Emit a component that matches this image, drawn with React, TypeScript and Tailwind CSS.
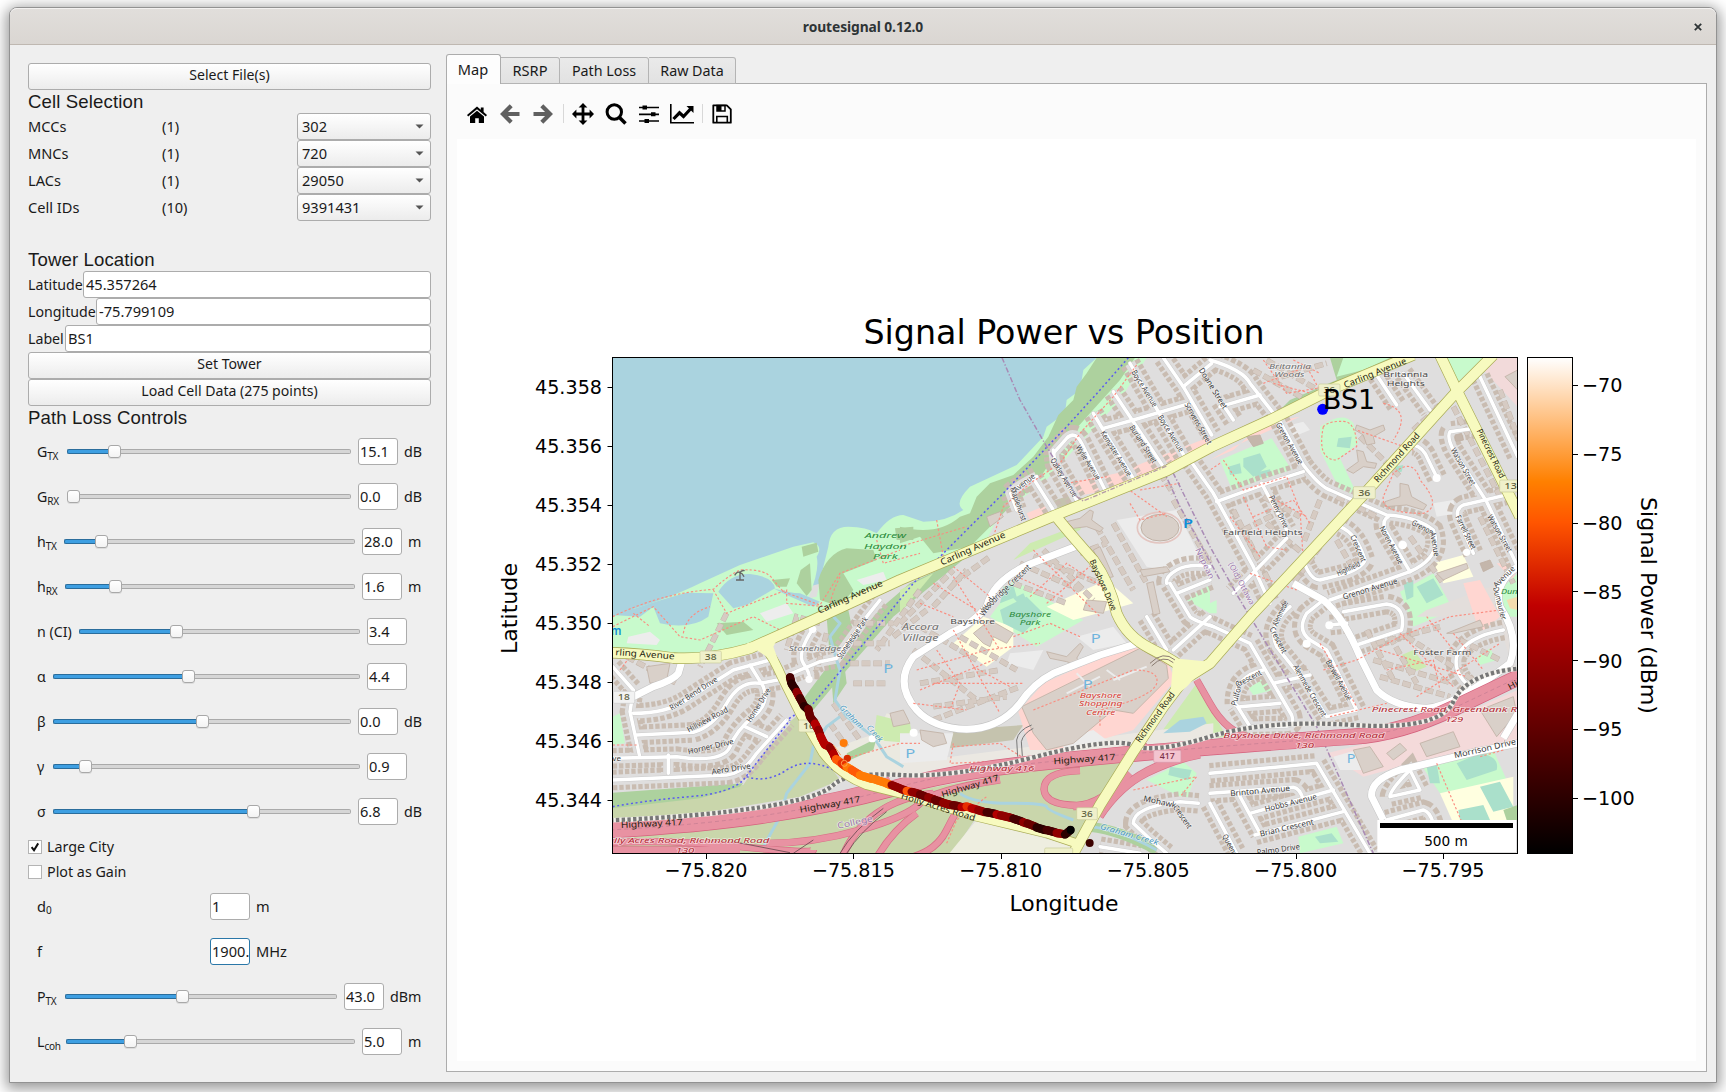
import React from "react";

const UI_FONT = "font-['Noto_Sans','Open_Sans',sans-serif]";

/* ---------- small widgets ---------- */

const frame = "border border-[#acacac] rounded-[3px]";

function PushButton({ children }: { children: React.ReactNode }) {
  return (
    <button className={`h-[27px] w-full shrink-0 ${frame} bg-linear-to-b from-white to-[#ececec] pb-[3px] text-center text-[14.100px] leading-[22px]`}>
      {children}
    </button>
  );
}

function ComboRow({ label, count, value }: { label: string; count: string; value: string }) {
  return (
    <div className="flex h-[27px] items-center">
      <span className="w-[134px]">{label}</span>
      <span className="w-[135px]">{count}</span>
      <div className={`flex h-[27px] flex-1 items-center justify-between ${frame} bg-linear-to-b from-white to-[#ececec] pr-[6px] pl-[4px]`}>
        <span>{value}</span>
        <svg width="9" height="5" viewBox="0 0 9 5">
          <path d="M0.5 0.5h8L4.5 4.6z" fill="#555" />
        </svg>
      </div>
    </div>
  );
}

function FieldRow({ label, value, labelClass }: { label: string; value: string; labelClass: string }) {
  return (
    <div className="flex h-[27px] items-center">
      <span className={`shrink-0 whitespace-nowrap text-[14.200px] ${labelClass}`}>{label}</span>
      <div className={`flex h-[27px] flex-1 items-center ${frame} bg-white pl-[2px]`}>{value}</div>
    </div>
  );
}

function ValueBox({ value, focused }: { value: string; focused?: boolean }) {
  return (
    <div
      className={`flex h-[27px] w-[40px] shrink-0 items-center overflow-hidden rounded-[3px] border bg-white pl-[1px] ${focused ? "border-[#2a77a8]" : "border-[#acacac]"}`}
    >
      {value}
    </div>
  );
}

type Slide = { base: string; sub?: string; start: number; end: number; knob: number; value: string; unit?: string };

function SliderRow({ base, sub, start, end, knob, value, unit }: Slide) {
  const filled = knob - 6 - start;
  return (
    <div className="flex h-[45px] items-center">
      <div className="shrink-0 whitespace-nowrap pl-[9px] text-[14.200px]" style={{ width: start - 28 }}>
        {base}
        {sub && <span className="relative top-[3px] text-[10px] tracking-[-0.3px]">{sub}</span>}
      </div>
      <div className="flex shrink-0 items-center" style={{ width: end - start }}>
        {filled > 0 && (
          <div className="h-[5px] rounded-l-[2px] border border-r-0 border-[#2a6d9c] bg-[#3e9fe2]" style={{ width: filled }} />
        )}
        <div className="h-[13px] w-[13px] shrink-0 rounded-[3px] border border-[#a8a8a8] bg-linear-to-b from-white to-[#f3f3f3] shadow-[0_1px_0_rgba(0,0,0,0.08)]" />
        <div className="h-[5px] flex-1 rounded-r-[2px] border border-l-0 border-[#aaaaaa] bg-[#d6d6d6]" />
      </div>
      <div className="w-[7px] shrink-0" />
      <ValueBox value={value} />
      {unit && <span className="pl-[6px] text-[14.300px]">{unit}</span>}
    </div>
  );
}

function PlainRow({ base, sub, value, unit, focused }: { base: string; sub?: string; value: string; unit: string; focused?: boolean }) {
  return (
    <div className="flex h-[45px] items-center pl-[9px]">
      <div className="w-[173px] shrink-0">
        {base}
        {sub && <span className="relative top-[2px] text-[10px]">{sub}</span>}
      </div>
      <ValueBox value={value} focused={focused} />
      <span className="pl-[6px]">{unit}</span>
    </div>
  );
}

function CheckRow({ label, checked }: { label: string; checked?: boolean }) {
  return (
    <div className="flex h-[25px] items-center gap-[5px]">
      <div className="flex h-[14px] w-[14px] items-center justify-center border border-[#b4b4b4] bg-white">
        {checked && (
          <svg width="10" height="10" viewBox="0 0 10 10">
            <path d="M1.6 5.2L4 8.2L8.2 1.4" fill="none" stroke="#111" strokeWidth="2" />
          </svg>
        )}
      </div>
      <span className="text-[14.300px]">{label}</span>
    </div>
  );
}

const SLIDERS: Slide[] = [
  { base: "G", sub: "TX", start: 67, end: 351, knob: 114, value: "15.1", unit: "dB" },
  { base: "G", sub: "RX", start: 67, end: 351, knob: 73, value: "0.0", unit: "dB" },
  { base: "h", sub: "TX", start: 64, end: 355, knob: 101, value: "28.0", unit: "m" },
  { base: "h", sub: "RX", start: 65, end: 355, knob: 115, value: "1.6", unit: "m" },
  { base: "n (CI)", start: 79, end: 360, knob: 176, value: "3.4" },
  { base: "α", start: 53, end: 360, knob: 188, value: "4.4" },
  { base: "β", start: 53, end: 351, knob: 202, value: "0.0", unit: "dB" },
  { base: "γ", start: 53, end: 360, knob: 85, value: "0.9" },
  { base: "σ", start: 53, end: 351, knob: 253, value: "6.8", unit: "dB" },
];

function Heading({ children, className }: { children: string; className: string }) {
  return <h2 className={`font-['Liberation_Sans',Arial,sans-serif] text-[18.6px] tracking-[0.120px] ${className}`}>{children}</h2>;
}

function Sidebar() {
  return (
    <aside className="flex w-[403px] shrink-0 flex-col pt-[18px]">
      <PushButton>Select File(s)</PushButton>
      <Heading className="h-[23px] leading-[23px]">Cell Selection</Heading>
      <ComboRow label="MCCs" count="(1)" value="302" />
      <ComboRow label="MNCs" count="(1)" value="720" />
      <ComboRow label="LACs" count="(1)" value="29050" />
      <ComboRow label="Cell IDs" count="(10)" value="9391431" />
      <Heading className="mt-[27px] h-[23px] leading-[23px]">Tower Location</Heading>
      <FieldRow label="Latitude" value="45.357264" labelClass="w-[55px]" />
      <FieldRow label="Longitude" value="-75.799109" labelClass="w-[68px]" />
      <FieldRow label="Label" value="BS1" labelClass="w-[37px]" />
      <PushButton>Set Tower</PushButton>
      <PushButton>Load Cell Data (275 points)</PushButton>
      <Heading className="h-[23px] leading-[23px]">Path Loss Controls</Heading>
      {SLIDERS.map((s, i) => (
        <SliderRow key={i} {...s} />
      ))}
      <CheckRow label="Large City" checked />
      <CheckRow label="Plot as Gain" />
      <PlainRow base="d" sub="0" value="1" unit="m" />
      <PlainRow base="f" value="1900." unit="MHz" focused />
      <SliderRow base="P" sub="TX" start={65} end={337} knob={182} value="43.0" unit="dBm" />
      <SliderRow base="L" sub="coh" start={66} end={355} knob={130} value="5.0" unit="m" />
    </aside>
  );
}

/* ---------- toolbar ---------- */

function Icon({ children, className }: { children: React.ReactNode; className: string }) {
  return (
    <svg viewBox="0 0 24 24" className={`h-[24px] w-[24px] shrink-0 ${className}`}>
      {children}
    </svg>
  );
}

function Toolbar() {
  return (
    <div className="flex h-[55px] items-center pt-[4px] pl-[18px]">
      <Icon className="">
        <path d="M12 4.6L2 13l1.2 1.4L12 7.2l8.8 7.2L22 13l-3.4-2.9V5.6h-2.8v2.2z" />
        <path d="M12 8.8L5 14.5V21h5.2v-4.8h3.6V21H19v-6.5z" />
      </Icon>
      <Icon className="ml-[9px]">
        <path d="M13.200 3.8L5 12L13.200 20.2M5.5 12H21.500" fill="none" stroke="#606060" strokeWidth="4.200" />
      </Icon>
      <Icon className="ml-[9px]">
        <path d="M10.800 3.8L19 12L10.800 20.2M18.5 12H2.500" fill="none" stroke="#606060" strokeWidth="4.200" />
      </Icon>
      <div className="ml-[8px] h-[19px] w-px bg-[#d8d8d8]" />
      <Icon className="ml-[7px]">
        <path d="M12 1l4.4 4.4h-3v5.2h5.2v-3L23 12l-4.4 4.4v-3h-5.2v5.2h3L12 23l-4.4-4.4h3v-5.2H5.400v3L1 12l4.400-4.400v3h5.200V5.400h-3z" />
      </Icon>
      <Icon className="ml-[9px]">
        <circle cx="10.3" cy="10" r="7.200" fill="none" stroke="#000" strokeWidth="3" />
        <path d="M15 15l6.500 6.500" stroke="#000" strokeWidth="3.600" />
      </Icon>
      <Icon className="ml-[9px]">
        <path d="M2 5.500h20M2 12.300h20M2 19h20" stroke="#000" strokeWidth="1.700" />
        <path d="M5.500 3.500h4.500v4h-4.500zM14 10.300h4.500v4H14zM7.500 17H12v4H7.500z" />
      </Icon>
      <Icon className="ml-[9px]">
        <path d="M0.800 2V20.800H24" fill="none" stroke="#000" strokeWidth="1.600" />
        <path d="M3.500 17l6-6.200 4 3.700 7-7.500" fill="none" stroke="#000" strokeWidth="3.200" />
        <path d="M16.500 4h7v7z" />
      </Icon>
      <div className="ml-[8px] h-[19px] w-px bg-[#d8d8d8]" />
      <Icon className="ml-[7px]">
        <path d="M3.300 3.300h13.500l4 4V20.700H3.300z" fill="none" stroke="#000" strokeWidth="1.800" strokeLinejoin="round" />
        <path d="M7 3.500h8V9H7z" fill="none" stroke="#000" strokeWidth="1.500" />
        <path d="M7 3.500h4.500V9H7z" />
        <path d="M6.800 20.500v-6h10.500v6" fill="none" stroke="#000" strokeWidth="1.600" />
      </Icon>
    </div>
  );
}

/* ---------- map ---------- */
/* Map geometry uses a grid of one third of a pixel. */

const HOUSE_STREETS = [
  "M1590 40L1760 330", "M1540 125L1690 350", "M1480 190L1510 240L1600 385", "M1510 235L1600 210L1770 160",
  "M1690 23L1750 110L1835 255", "M1750 110L1835 40", "M1360 310L1400 265Q1425 240 1445 280L1515 420", "M1300 385L1360 480",
  "M1360 300L1365 340L1430 450", "M1250 480L1232 430Q1240 415 1310 380", "M1770 330L1840 430L1960 650L2010 760",
  "M1700 700Q1695 680 1730 660T1830 650M1710 700L1770 800Q1780 810 1840 830", "M1730 730L1830 690",
  "M1830 30Q1930 60 1950 100L2040 215L2110 345Q2160 410 2190 420L2360 495Q2450 500 2500 540Q2530 620 2430 665L2190 750",
  "M2430 665L2355 540Q2345 510 2365 500", "M1850 455L2000 400L2110 365", "M1985 400L2060 540", "M2060 565L1900 730",
  "M2220 530Q2270 550 2295 630Q2290 650 2240 670L2160 690Q2130 690 2110 630", "M2625 235L2550 245Q2540 260 2560 300L2660 455L2753 650",
  "M2740 430L2590 465Q2560 480 2580 520L2620 610", "M2640 80L2753 320", "M2330 75L2390 165", "M2410 70L2490 180",
  "M2440 285Q2470 290 2485 330L2512 385", "M1860 170L1980 135M1900 210L1860 150",
  "M2170 750L2120 790Q2090 840 2130 870L2180 900L2270 1080M2070 770Q2000 830 2030 890L2110 990L2180 1100L2270 1080",
  "M2230 785L2360 762Q2420 770 2405 840L2270 885", "M2190 825L2240 820",
  "M1830 825L1950 880L2075 1095Q2085 1125 2060 1128L1950 1130L1910 1065M1920 1070L2040 1060M2020 1000L2130 975M1990 960Q1900 980 1905 1065",
  "M2710 840Q2600 860 2570 920Q2560 970 2610 1010", "M1830 1270L2150 1240L2310 1510", "M1830 1330L2080 1312Q2100 1315 2110 1350",
  "M1950 1390L2200 1320", "M1965 1455L2230 1385", "M1915 1330L1980 1450", "M1830 1360L1910 1510",
  "M2370 1340Q2370 1320 2430 1260L2460 1320L2370 1340M2360 1410L2470 1380Q2490 1385 2500 1420",
  "M100 1090Q200 1090 260 1050T400 960L510 930", "M110 1155L280 1147Q340 1130 380 1060T480 1000L560 985",
  "M450 945L490 1010Q510 1060 460 1100T390 1190T230 1220L38 1225", "M38 1290L380 1275Q430 1270 470 1210L560 1110",
  "M205 1215V1270M435 1130L500 1160M38 950L100 1020L90 1085L118 1215", "M640 835Q590 910 610 940T628 985",
  "M840 750L800 800L710 925L660 935L540 985", "M1795 1360L1740 1355Q1600 1370 1600 1420Q1650 1470 1700 1510", "M1500 1490L1620 1510",
  "M1640 800L1700 900M1720 900L1830 800",
];

const COURTS = [
  "M960 830L1130 930M940 900L1130 1050M960 1000L1200 960M1080 860L1250 960M1000 1070L1220 1040",
  "M1060 700L1170 620M1000 770L1100 660M900 820L1060 660M880 860L980 780",
  "M1260 640L1440 720M1240 700L1400 760M1300 620L1500 700M1330 600L1480 750",
  "M760 820H880M760 880H870M750 940H870M760 1000H860M960 720L830 900",
  "M2000 30L2170 130M1960 60L2120 150M2010 90L2180 40", "M1930 540L2050 480M2000 520L2120 620M1990 440L2100 500",
  "M2320 930L2560 1000M2340 980L2550 1040M2420 860L2620 990M2330 880L2520 830M2580 870L2700 930",
  "M1490 530L1600 720M1540 520L1640 700M1440 610L1520 580", "M380 790L300 950M80 920L230 1000",
  "M2280 260L2400 380M2430 560L2530 700", "M700 1060L780 1170M690 1120L740 1190",
  "M2160 450L2110 580M2210 440L2330 500M2440 240L2560 130M2560 170L2700 440M2640 500L2740 700M2700 120L2753 260",
  "M1900 480L2010 700M2160 590L2080 700M2210 570L2250 640M2370 860L2450 1000M2300 840L2380 990",
  "M660 820L590 800L560 900M680 850L650 960", "M1720 450L1830 640M1680 370L1720 430M1000 1110L1260 1010",
];

const THICK = [
  "M1425 590L1290 642Q1180 690 1160 770Q1120 820 1050 850L940 920Q880 1000 950 1080Q1000 1135 1100 1138Q1200 1135 1260 1060Q1300 1000 1360 970L1500 915L1620 878",
  "M2080 700L2170 750Q2230 800 2280 920L2330 1020Q2380 1070 2480 1075Q2560 1070 2730 940Q2760 860 2700 770Q2680 700 2753 650",
  "M2753 1180L2630 1205L2400 1260Q2310 1290 2315 1340L2350 1410",
  "M245 935L235 970Q220 990 160 1010L90 1045", "M2710 1165L2760 1080",
];

const PATHS = [
  "M38 800Q180 730 340 718Q380 680 420 660Q500 655 520 690L550 725L660 765L720 670L900 600",
  "M340 720L380 790L480 750L560 720L560 760L680 770", "M38 830L160 770L240 860L300 870L460 800L560 850",
  "M100 790L150 830M250 850Q260 790 330 770", "M720 680Q700 720 690 760M830 570L850 640L960 610",
  "M1610 45L1540 140L1440 250L1380 340L1290 400L1210 470L1180 560", "M1010 510L1030 620M900 590L1100 530",
  "M1400 400L1520 380M1560 400L1700 500M1620 420L1740 400M1590 460L1620 510L1700 490", "M1300 600L1500 800M1060 680L1200 900",
  "M2170 230Q2150 330 2210 330L2270 290Q2270 230 2240 215Q2190 210 2170 230", "M2350 440Q2340 490 2470 490Q2530 470 2460 390Q2440 320 2380 370Z",
  "M1870 330L1930 420L2060 380L2100 480L2110 630", "M1930 440L2000 590L2060 600", "M1950 670L2090 720",
  "M2440 300L2270 240M1990 100L2120 50L2170 140L2020 100", "M2350 160Q2440 180 2380 270",
  "M950 960L1160 900L1320 880M1000 1000L1270 1000M940 1060L1100 1080M1060 840L1200 1090",
  "M1060 1180L1050 1240L1280 1230L1200 1180L1060 1190", "M1300 1080L1600 960Q1680 960 1670 1000T1500 1080V1130",
  "M2170 960L2270 930L2400 860L2550 800L2700 780", "M2400 850L2560 1010M2340 900L2600 980M2450 1040L2700 880M2480 800L2560 900",
  "M2160 880L2270 1070M2190 1100L2360 1060", "M2510 1240L2600 1450", "M1600 1320L1790 1280L1740 1340", "M2710 1200L2640 1220",
  "M740 1225L900 1180L960 1180M38 1185H110M60 960L90 920L240 930", "M1040 1480L1070 1410L1160 1340",
  "M1000 700L1130 780M1060 650L1170 740M960 760L1060 800", "M1290 740L1400 640L1520 720M1340 760L1480 640M1250 680L1390 740",
  "M1010 900L1080 1000L1050 1080M960 1020L1180 930M1120 950L1230 1010", "M2360 960L2500 930L2520 1020M2560 850L2650 960",
  "M2010 440L2120 500M1960 500L2080 450L2130 520", "M1990 30L2060 130L2180 110M2080 30L2160 70", "M1440 860L1350 820L1240 860",
  "M1860 340L1830 360M1890 500L1980 620",
];

type BoxDef = [string, string];
const BUILDINGS: BoxDef[] = [
  ["M1265 1070L1620 895L1700 945L1705 985L1600 1090L1540 1080L1420 1180L1340 1200L1300 1150Z", "#d9d0c9"],
  ["M1400 515L1440 505L1470 480L1480 485L1475 510L1510 535L1500 545L1460 530L1420 535Z", "#d9d0c9"],
  ["M1340 905L1400 920L1440 880L1450 890L1430 925L1450 940L1440 950L1400 935L1350 925Z", "#d9d0c9"],
  ["M2270 225L2310 240L2350 225L2355 240L2320 260L2325 280L2300 285L2290 255L2265 240Z", "#d9d0c9"],
  ["M2270 300L2290 305L2300 335L2330 340L2325 355L2290 350L2260 370L2240 360L2275 335Z", "#d9d0c9"],
  ["M2400 400L2425 405L2435 440L2480 465L2470 480L2420 465L2355 470L2355 455L2400 440Z", "#d9d0c9"],
  ["M1120 850L1170 810L1240 850L1220 880L1180 860L1170 890L1150 880Z", "#d9d0c9"],
  ["M960 1140L1030 1150L1040 1180L1000 1190L965 1170Z", "#d9d0c9"], ["M1160 500L1200 485L1210 500L1170 530Z", "#d9d0c9"],
  ["M1460 750L1520 755L1510 790L1450 780Z", "#d9d0c9"],
  ["M2460 1180L2560 1145L2580 1190L2480 1220Z", "#d9d0c9"], ["M2260 1200L2310 1190L2350 1250L2290 1270Z", "#d9d0c9"],
  ["M2640 1080L2740 1040L2750 1090L2690 1160Z", "#d9d0c9"], ["M2360 1210L2400 1180L2420 1200L2380 1230Z", "#d9d0c9"],
  ["M1940 260L1980 255L1990 280L1960 290Z", "#c4b6ab"], ["M2565 255L2585 250L2590 270L2568 275Z", "#c4b6ab"],
  ["M2640 640L2670 630L2680 650L2650 665Z", "#c4b6ab"], ["M2510 670L2600 640L2605 655L2530 690Z", "#d9d0c9"],
  ["M140 950L210 940L200 990L150 1000Z", "#d9d0c9"], ["M870 1090L910 1080L930 1120L880 1130Z", "#d9d0c9"],
  ["M2540 850L2640 810L2650 830L2560 850Z", "#d9d0c9"], ["M2715 80L2753 60V120Z", "#d9d0c9"],
  ["M1480 600L1500 590L1540 680L1520 685ZM1620 660L1700 650L1710 665L1630 680ZM1640 700L1660 695L1680 790L1660 795Z", "#d9d0c9"],
];

type LabelDef = [string, number, number, number, number, string?, number?];
/* text, x, y, angle, length, kind, size */
const LABELS: LabelDef[] = [
  ["Carling Avenue", 1118, 595, -24, 210, "road", 27], ["Carling Avenue", 750, 740, -24, 210, "road", 27],
  ["Carling Avenue", 2325, 68, -22, 200, "road", 27], ["rling Avenue", 135, 912, 4, 178, "road", 27],
  ["Bayshore Drive", 1510, 705, 66, 165, "road", 25], ["Richmond Road", 2390, 322, -48, 190, "road", 27],
  ["Richmond Road", 1665, 1101, -54, 180, "road", 27], ["Pinecrest Road", 2673, 310, 64, 160, "road", 25],
  ["Holly Acres Road", 1015, 1370, 17, 232, "road", 26],
  ["Highway 417", 155, 1420, -3, 186, "road", 26], ["Highway 417", 690, 1363, -10, 184, "road", 26],
  ["Highway 417", 1110, 1308, -17, 178, "road", 26], ["Highway 417", 1453, 1227, -4, 186, "road", 26], ["Hi", 2738, 1005, -28, 30, "road", 26],
  ["Boyce Avenue", 1634, 115, 58, 125], ["Boyce Avenue", 1713, 250, 58, 125], ["Burland Street", 1630, 282, 57, 130],
  ["Scrivens Street", 1795, 220, 60, 140], ["Kempster Avenue", 1549, 310, 58, 155], ["Wylie Avenue", 1465, 337, 58, 118],
  ["Oakley Avenue", 1392, 382, 58, 132], ["Doane Street", 1840, 115, 58, 140], ["Maplehurst", 1255, 462, 70, 105],
  ["Avenue", 1272, 398, -38, 75], ["Woodridge Crescent", 1217, 715, -44, 195, "st", 26], ["Wood", 1160, 770, -60, 60, "st", 24],
  ["Grenon Avenue", 2069, 280, 60, 140], ["Penny Drive", 2037, 485, 64, 105], ["Watson Street", 2590, 350, 60, 125],
  ["Watson Street", 2700, 550, 60, 125], ["Farrell Street", 2598, 547, 64, 110], ["Noren Avenue", 2375, 585, 62, 125],
  ["Grenon", 2468, 532, 28, 70], ["Avenue", 2505, 582, 80, 75], ["Grenon Avenue", 2310, 716, -17, 170],
  ["Highfield", 2245, 655, -25, 75], ["Crescent", 2275, 595, 66, 85], ["Dumaurier", 2700, 760, 75, 100],
  ["Avenue", 2712, 680, -45, 80], ["Alenmede", 2040, 790, -65, 80], ["Crescent", 2035, 870, 62, 85],
  ["Alenmede Crescent", 2130, 1022, 60, 175], ["Barwell Avenue", 2217, 990, 61, 135], ["Pulford", 1910, 1030, -75, 75],
  ["Crescent", 1945, 985, -28, 85], ["Brinton Avenue", 1980, 1322, -5, 180], ["Hobbs Avenue", 2072, 1358, -14, 160],
  ["Brian Crescent", 2060, 1433, -13, 165], ["Palmo Drive", 2035, 1498, -8, 130], ["Queens", 1890, 1485, 62, 70],
  ["Morrison Drive", 2655, 1195, -13, 190, "st", 25], ["Mohawk", 1680, 1355, 12, 100], ["Crescent", 1748, 1400, 55, 80],
  ["River Bend Drive", 280, 1030, -33, 165], ["Hillview Road", 322, 1108, -28, 135],
  ["Horner Drive", 475, 1065, -58, 115], ["Horner Drive", 332, 1189, -13, 140], ["Aero Drive", 393, 1256, -9, 118],
  ["Stonehedge Park", 757, 863, -56, 145], ["ve", 50, 1223, 0, 26],
  ["Andrew", 856, 556, 0, 124, "park"], ["Haydon", 856, 588, 0, 128, "park"], ["Park", 856, 619, 0, 74, "park"],
  ["Bayshore", 1290, 791, 0, 126, "park"], ["Park", 1290, 817, 0, 62, "park"], ["Dun", 2728, 723, 0, 50, "park"],
  ["Accora", 961, 832, 0, 110, "area", 26], ["Village", 961, 863, 0, 108, "area", 26], ["Stonehedge", 645, 893, 0, 158, "area"],
  ["Britannia", 2070, 47, 0, 126, "area"], ["Woods", 2068, 73, 0, 90, "area"],
  ["Bayshore", 1118, 812, 0, 134, "town"], ["Britannia", 2417, 71, 0, 134, "town"], ["Heights", 2417, 98, 0, 114, "town"],
  ["Fairfield Heights", 1988, 545, 0, 238, "town"], ["Foster Farm", 2527, 907, 0, 174, "town"],
  ["Bayshore", 1502, 1034, 0, 126, "shop"], ["Shopping", 1502, 1060, 0, 130, "shop"], ["Centre", 1502, 1086, 0, 88, "shop"],
  ["lly Acres Road, Richmond Road", 275, 1470, 0, 466, "exit"], ["130", 255, 1499, 0, 56, "exit"],
  ["Highway 416", 1205, 1253, 0, 196, "exit"], ["Bayshore Drive, Richmond Road", 2112, 1156, 0, 484, "exit"], ["130", 2114, 1184, 0, 56, "exit"],
  ["Pinecrest Road, Greenbank R", 2533, 1078, 0, 436, "exit"], ["129", 2563, 1107, 0, 54, "exit"],
  ["College", 765, 1416, -12, 108, "county", 26], ["(Old) Ottawa", 1925, 700, 62, 140, "county"], ["Nepean", 1815, 640, 64, 100, "county"],
  ["Graham", 755, 1100, 45, 90, "water"], ["Creek", 825, 1150, 48, 60, "water"], ["Graham Creek", 1588, 1453, 16, 180, "water"],
  ["P", 1764, 520, 0, 30, "parkB", 40], ["P", 1487, 866, 0, 30, "parking", 36], ["P", 1463, 1005, 0, 30, "parking", 36],
  ["P", 865, 957, 0, 30, "parking", 36], ["P", 931, 1211, 0, 30, "parking", 36], ["P", 2253, 1225, 0, 26, "parking", 36], ["m", 48, 843, 0, 32, "parkB", 36],
];

const LABEL_COLOR: Record<string, string> = {
  road: "#25230f", st: "#3a3a3a", park: "#2a8a3a", area: "#6f6f6f", town: "#4a4a4a", shop: "#d83c34",
  exit: "#b3252f", county: "#9d79ad", water: "#4f9ac0", parking: "#6fb4dd", parkB: "#0f8fd8",
};

function MapLabel({ d }: { d: LabelDef }) {
  const [text, x, y, angle, len, kind = "st", size = 24] = d;
  const italic = ["park", "area", "shop", "exit", "water"].includes(kind);
  return (
    <text
      transform={`translate(${x} ${y}) rotate(${angle})`}
      textAnchor="middle"
      dy="0.36em"
      fontSize={size}
      fontStyle={italic ? "italic" : "normal"}
      fontWeight={kind === "parkB" ? 600 : 400}
      textLength={len}
      lengthAdjust="spacingAndGlyphs"
      fill={LABEL_COLOR[kind]}
      stroke={kind === "road" || kind.startsWith("park") ? "none" : "rgba(255,255,255,0.55)"}
      strokeWidth="4"
      paintOrder="stroke"
    >
      {text}
    </text>
  );
}

function Shield({ x, y, w, text, pink, white }: { x: number; y: number; w: number; text: string; pink?: boolean; white?: boolean }) {
  return (
    <g>
      <rect x={x - w / 2} y={y - 18} width={w} height="36" rx="4" fill={pink ? "#f3c4d0" : white ? "#f2f2f2" : "#eff0cb"} stroke={pink ? "#d99aaa" : white ? "#cfcfcf" : "#c9cb9a"} strokeWidth="2" />
      <text x={x} y={y + 9} textAnchor="middle" fontSize="24" fontWeight="500" textLength={w * 0.55} lengthAdjust="spacingAndGlyphs" fill={pink ? "#7a3048" : "#5d5f3e"}>
        {text}
      </text>
    </g>
  );
}

const HEAT: Record<string, string> = { k: "#2c0000", d: "#480000", m: "#6a0000", r: "#900000", s: "#b40000", e: "#e83000", o: "#ff5a08", y: "#ff7c08" };
const TRACK: [number, number, string][] = [
  [570, 982, "d"], [574, 1000, "k"], [590, 1025, "r"], [600, 1045, "d"], [612, 1068, "k"], [625, 1078, "m"], [630, 1100, "m"],
  [645, 1120, "s"], [655, 1140, "r"], [662, 1160, "s"], [675, 1185, "s"], [690, 1192, "r"], [700, 1210, "s"], [708, 1228, "o"],
  [725, 1240, "e"], [740, 1252, "y"], [755, 1260, "o"], [780, 1275, "y"], [820, 1287, "y"], [860, 1300, "y"], [875, 1306, "r"],
  [905, 1318, "r"], [920, 1322, "o"], [935, 1326, "r"], [960, 1333, "m"], [985, 1343, "r"], [1005, 1350, "m"], [1030, 1358, "r"],
  [1060, 1366, "m"], [1085, 1371, "s"], [1100, 1370, "e"], [1115, 1375, "s"], [1135, 1380, "r"], [1160, 1387, "d"], [1190, 1393, "s"],
  [1203, 1397, "r"], [1240, 1406, "d"], [1270, 1416, "r"], [1283, 1421, "m"], [1310, 1432, "k"], [1340, 1441, "d"], [1370, 1449, "r"], [1395, 1453, "k"], [1411, 1440, "k"],
];

function Track() {
  const dots: React.ReactNode[] = [];
  TRACK.forEach(([x, y, c], i) => {
    const next = TRACK[i + 1];
    const n = next ? Math.max(1, Math.round(Math.hypot(next[0] - x, next[1] - y) / 4)) : 1;
    for (let k = 0; k < n; k++) {
      const t = k / n;
      const wob = next ? (((i * 7 + k * 5) % 5) - 2) * 0.4 : 0;
      dots.push(<circle key={`${i}-${k}`} cx={next ? x + (next[0] - x) * t : x} cy={(next ? y + (next[1] - y) * t : y) + wob} r="12.500" fill={HEAT[c]} />);
    }
  });
  return (
    <g>
      {dots}
      <path d="M700 1185L722 1215" stroke="#f9a060" strokeWidth="3" />
      <circle cx="731" cy="1179" r="12" fill="#ff7c08" />
      <circle cx="742" cy="1225" r="11" fill="#d62a00" />
      <circle cx="733" cy="1240" r="9" fill="none" stroke="#ffa050" strokeWidth="3" />
      <circle cx="1412" cy="1440" r="12" fill="#000" />
      <circle cx="1469" cy="1479" r="12" fill="#3c0000" />
    </g>
  );
}

const CARLING = "M30 908Q120 910 220 924Q330 930 450 895L640 810L900 690L1370 494L1700 362L1835 290L2010 210L2200 115L2440 15";
const RICHMOND = "M2680 15L2570 125L2290 435L2100 640L1960 790L1830 940L1750 990L1690 1070L1600 1205L1500 1365L1415 1520";
const BAYSHORE = "M1365 495Q1400 540 1480 630Q1530 700 1550 790Q1580 860 1650 895T1780 975";
const HOLLY = "M480 880Q510 900 545 980L600 1090L670 1210Q720 1275 800 1305L920 1335L1130 1400L1340 1450L1430 1480";
const PINECREST = "M2520 15L2575 130L2640 260L2720 420L2760 500";
const H417 = "M30 1440Q300 1425 500 1395T880 1315T1300 1240T1830 1192T2260 1160T2560 1075T2770 975";
const RAIL = "M30 1411Q300 1400 480 1372T700 1305T900 1275T1300 1222T1600 1186T1830 1160T2260 1125T2560 1055T2765 955";
const RAMPS = [
  "M30 1478Q200 1468 420 1490T640 1500", "M30 1500H420", "M500 1480Q640 1480 780 1440T960 1360T1200 1290", "M730 1515Q760 1440 830 1390T1000 1330",
  "M835 1515Q880 1440 950 1390", "M940 1520Q1010 1500 1040 1440T1070 1390", "M640 1350Q800 1320 870 1290",
  "M1640 1190Q1590 1190 1560 1225M1440 1262Q1332 1265 1332 1318Q1335 1365 1430 1366Q1500 1365 1590 1270",
  "M1420 1370Q1500 1370 1570 1310T1760 1215T1880 1200",
  "M1500 1400Q1560 1310 1640 1270T1800 1215", "M1790 990L1830 1060Q1880 1150 1960 1165",
];

function MapArt() {
  return (
    <g transform="translate(600 350) scale(0.33333)" fontFamily="'Noto Sans','Open Sans',sans-serif">
      <rect x="38" y="23" width="2715" height="1487" fill="#dfdede" />

      {/* water, parks and woods */}
      <path d="M38 23H1500L1380 330L900 640L38 860Z" fill="#aad3df" />
      <path d="M38 795Q200 750 300 700L420 645L580 590L640 577Q670 590 650 620Q660 660 625 745L650 740L670 650L685 590Q690 530 745 530Q800 530 830 550Q870 495 910 495L970 515Q1040 515 1090 480Q1060 460 1110 410L1250 345L1330 260L1340 230L1395 190L1400 150L1440 120L1450 60L1490 23H1640L1560 150L1440 280L1330 400L1200 490L1150 590L900 700L560 860L440 890L250 925L38 900Z" fill="#c8facc" />
      <path d="M900 530Q1010 560 1080 500L1110 490L1130 440L1170 400L1240 375L1300 320L1345 260L1375 195L1420 150L1430 110L1460 70L1490 23H1605L1560 90L1470 190L1380 290L1310 400L1220 480L1110 590L1000 610L960 560L900 580Z" fill="#add19e" />
      <path d="M655 690Q680 610 740 595L820 600L830 630L730 670L760 720L720 770L660 750ZM605 590L650 578L655 605L610 620ZM602 660L630 640L635 720L620 738L590 700ZM515 690L570 685L560 710L530 710ZM885 535L940 530V570L890 570Z" fill="#add19e" />
      <path d="M355 725Q390 670 450 672Q520 680 525 715L440 765L400 775ZM38 800Q140 760 260 728L340 730L325 800Q270 840 180 820L160 770L120 780L38 785ZM520 715Q570 730 600 730L660 755L640 770L560 735Z" fill="#aad3df" />
      <path d="M38 784L160 770L120 800L38 795Z" fill="#aad3df" />
      <path d="M85 860L150 845L180 870L170 885L80 880ZM480 790L560 760L580 790L500 815ZM770 690L850 665L860 690L790 705Z" fill="#ededed" />
      <path d="M350 820L430 815L460 840L380 855Z" fill="#add19e" />
      <path d="M930 700L1100 620L880 800L740 960L640 1080L600 1060L720 900L860 760Z" fill="#add19e" />
      <path d="M900 720L1000 670L900 790Z" fill="#cdebb0" />
      <path d="M680 800L745 780L760 850L730 920L740 1000L700 1060L690 930Z" fill="#add19e" />
      <path d="M38 1100L60 1090L75 1180L38 1185Z" fill="#c8facc" />

      {/* grass beside the freeway */}
      <path d="M30 1350L430 1305L540 1140L600 1090L670 1220L720 1290L600 1340L300 1390L30 1405Z" fill="#c9d6ab" />
      <path d="M30 1470L500 1410L900 1330L1400 1240H1600L1500 1340L1430 1480L1130 1400L1050 1520H30Z" fill="#c9d6ab" />
      <path d="M38 1328L430 1300L420 1310L300 1345L38 1375Z" fill="#add19e" />
      <path d="M1130 1410L1430 1490V1520H1040Z" fill="#eeeee0" />
      <path d="M700 1195L830 1150L860 1090L930 1110V1260L800 1290Z" fill="#ebe9e0" />
      <path d="M830 1095L930 1120L940 1180L820 1170ZM1660 1180L1790 1000L1840 1090L1880 1160ZM1290 580L1450 520L1440 540L1240 630Z" fill="#cdebb0" />
      <path d="M740 1210L830 1165L820 1200L750 1230Z" fill="#add19e" />
      <path d="M900 1240L1600 1150L1840 1120V1165L1500 1210L900 1290Z" fill="#ebe8e2" />
      <path d="M1060 1140L1270 1125L1240 1170L1050 1195ZM1350 455L1430 430L1450 450L1370 475Z" fill="#c5c3ae" />
      <path d="M1690 1150L1740 1110L1810 1100L1820 1120L1770 1145Z" fill="#aad3df" />

      {/* parks and schools among the houses */}
      <path d="M1200 760L1240 690L1450 810L1310 890L1170 800Z" fill="#c8facc" />
      <path d="M1340 770L1520 690L1600 760L1530 780L1420 810Z" fill="#ffffe0" />
      <path d="M1060 880L1150 800L1240 830L1240 890L1160 950Z" fill="#ffffe0" />
      <path d="M1200 780L1280 740L1330 790L1270 850L1210 820ZM1210 710L1240 705L1250 740L1200 760ZM1240 745L1270 730L1280 750L1255 760Z" fill="#aae0cb" />
      <path d="M1860 330L2015 265L2075 360L1900 430ZM2160 230Q2230 180 2260 220L2275 280L2220 325L2265 420L2230 440L2160 300Z" fill="#c8facc" />
      <path d="M1930 325L1980 310L2000 350L1960 380L1930 350ZM1960 370L2010 358L2015 375L1970 385ZM2215 265L2255 260L2250 295L2210 290ZM2380 350L2410 345L2405 365L2380 370ZM1885 350L1920 340L1925 370L1890 375Z" fill="#aae0cb" />
      <path d="M2190 23H2450L2250 100L2040 180L2070 150L2210 90Z" fill="#add19e" />
      <path d="M2230 23H2370L2290 60L2210 80ZM2530 23H2650L2570 100Z" fill="#c8facc" />
      <path d="M2400 725L2500 670L2560 780L2440 830Z" fill="#c8facc" />
      <path d="M2410 700L2440 690L2440 740L2420 750ZM2450 710L2500 685L2530 735L2480 760Z" fill="#aae0cb" />
      <path d="M2500 640L2590 615L2620 680L2530 700Z" fill="#ffffe0" />
      <path d="M2450 800L2480 780L2700 700L2753 1000L2700 830L2560 800Z" fill="#e3dedb" />
      <path d="M2590 700L2640 690L2700 800L2640 850ZM2690 640L2753 640L2740 690Z" fill="#ffd6d1" />
      <path d="M2700 720L2753 670V800H2720Z" fill="#c8facc" />
      <path d="M2720 750L2753 740V780L2730 775Z" fill="#f4dcae" />
      <path d="M2405 915L2440 900L2480 950L2430 970Z" fill="#cdebb0" />
      <path d="M2630 920L2670 895L2690 930L2640 945ZM1945 1015L2000 980L2020 1020L1960 1035ZM1830 760L1850 750V790H1830ZM1760 750L1830 700V790Z" fill="#c8facc" />
      <path d="M2460 1240L2680 1200L2720 1290L2520 1330Z" fill="#c8facc" />
      <path d="M2520 1330L2740 1280V1420H2560Z" fill="#ffffe0" />
      <path d="M2570 1240L2640 1210Q2700 1220 2690 1260L2600 1290ZM2640 1310L2700 1295L2740 1370L2680 1385ZM2575 1380L2650 1365L2670 1410H2580ZM2480 1250L2510 1240L2520 1300L2490 1300Z" fill="#aae0cb" />
      <path d="M2710 1380L2753 1365V1410H2720Z" fill="#add19e" />
      <path d="M2095 1460L2210 1430L2230 1480L2100 1510Z" fill="#c8facc" />
      <path d="M2145 1460L2195 1450L2215 1475L2160 1480Z" fill="#aae0cb" />
      <path d="M1640 1290L1750 1235L1790 1270L1760 1350Z" fill="#c8facc" />
      <path d="M1710 1250L1775 1260L1765 1290L1705 1275Z" fill="#aae0cb" />

      {/* retail */}
      <path d="M1255 1085L1330 1000L1600 880L1700 930L1725 990L1600 1140L1400 1200L1290 1200Z" fill="#ffd6d1" />
      <path d="M1410 400L1550 370L1830 260L1835 310L1640 400L1420 440ZM1280 490L1340 465L1350 490L1290 510ZM1830 330L1900 300L1990 220L2100 200L1900 290Z" fill="#ffd6d1" />
      <path d="M2180 1210L2500 1130L2753 1020V1180L2400 1250L2290 1280Z" fill="#f4dada" />
      <path d="M2660 23H2753V170L2650 60Z" fill="#f2dada" />
      <path d="M1550 510L1730 480L1830 680L1640 650ZM1230 910L1330 900L1300 960L1220 940ZM1430 860L1540 830L1580 880L1480 900ZM900 1150L1060 1150L1040 1230L900 1240ZM1370 1170L1480 1140L1520 1170L1400 1200ZM2200 1220L2270 1200L2290 1260L2220 1260ZM2050 230L2110 215L2130 240L2080 260ZM2500 460L2560 450L2570 490L2510 500Z" fill="#ececec" />

      {/* houses along the streets */}
      <g fill="none" stroke="#c9bcb1" strokeWidth="62" strokeDasharray="13 6">
        {HOUSE_STREETS.map((d, i) => <path key={i} d={d} />)}
      </g>
      <g fill="none" stroke="#dfdede" strokeWidth="31">
        {HOUSE_STREETS.map((d, i) => <path key={i} d={d} />)}
      </g>
      <g fill="none" strokeWidth="17" strokeDasharray="26 9">
        {COURTS.map((d, i) => <path key={i} d={d} stroke="#c3b5aa" />)}
      </g>
      <g fill="none" strokeWidth="14" strokeDasharray="24 11" strokeDashoffset="-1">
        {COURTS.map((d, i) => <path key={i} d={d} stroke="#d6cbc3" />)}
      </g>
      {BUILDINGS.map(([d, f], i) => <path key={i} d={d} fill={f} stroke="#c0b1a5" strokeWidth="2.500" />)}
      <ellipse cx="1678" cy="533" rx="66" ry="46" fill="none" stroke="#e3c5c0" strokeWidth="5" />
      <ellipse cx="1680" cy="533" rx="57" ry="40" fill="#d9d0c9" stroke="#c0b1a5" strokeWidth="3" />
      <path d="M1400 1030L1500 980M1430 970L1470 1010M1520 960L1560 990M1540 990L1640 950" stroke="#ececec" strokeWidth="6" />

      {/* creeks */}
      <g fill="none" stroke="#aad3df" strokeWidth="9" strokeLinejoin="round">
        <path d="M700 800L720 820L690 860L710 930L720 960L705 1050L740 1100L820 1160L860 1220L910 1250" />
        <path d="M720 1100L680 1130L640 1190L630 1240L560 1330L540 1400L490 1490" />
        <path d="M1080 1330Q1120 1360 1230 1360T1340 1370T1420 1410" />
      </g>
      <path d="M1470 1430Q1560 1440 1670 1500" fill="none" stroke="#add19e" strokeWidth="30" />
      <path d="M1470 1430Q1560 1440 1670 1500" fill="none" stroke="#aad3df" strokeWidth="8" />

      {/* local streets */}
      <g fill="none" stroke="#c9c9c9" strokeWidth="13" strokeLinecap="round" strokeLinejoin="round">
        {HOUSE_STREETS.map((d, i) => <path key={i} d={d} />)}
      </g>
      <g fill="none" stroke="#c4c4c4" strokeWidth="24" strokeLinejoin="round">
        {THICK.map((d, i) => <path key={i} d={d} />)}
      </g>
      <g fill="none" stroke="#fff" strokeWidth="10.500" strokeLinecap="round" strokeLinejoin="round">
        {HOUSE_STREETS.map((d, i) => <path key={i} d={d} />)}
      </g>
      <g fill="none" stroke="#fff" strokeWidth="21" strokeLinejoin="round">
        {THICK.map((d, i) => <path key={i} d={d} />)}
      </g>
      <g fill="#fff">
        <circle cx="2408" cy="585" r="13" /><circle cx="2510" cy="384" r="12" /><circle cx="2188" cy="826" r="12" /><circle cx="2120" cy="881" r="12" />
        <circle cx="638" cy="838" r="11" /><circle cx="627" cy="988" r="11" /><circle cx="817" cy="1166" r="11" /><circle cx="941" cy="1148" r="12" /><circle cx="2600" cy="607" r="11" />
      </g>

      {/* footpaths and cycle tracks */}
      <g fill="none" stroke="#fa8d80" strokeWidth="3.500" strokeDasharray="7 6">
        {PATHS.map((d, i) => <path key={i} d={d} />)}
      </g>
      <g fill="none" stroke="#5a5af0" strokeWidth="4.500" strokeDasharray="6 8">
        <path d="M1585 23L1500 120L1400 230L1340 292L1200 440L1110 530L1000 640L940 700L800 870L640 1060L560 1110" />
        <path d="M38 1370Q150 1350 270 1340T430 1290L570 1110M440 1280Q500 1300 560 1260T700 1260" />
      </g>
      <g fill="none" stroke="#a98bb5" strokeWidth="4.500" strokeDasharray="16 6 4 6">
        <path d="M1206 23L1260 150L1340 290L1430 440L1450 452L1700 345L1720 370L1830 590L1920 750L2150 1130L2320 1510" />
        <path d="M1690 360L1740 470L1860 690" />
      </g>

      {/* freeway and ramps */}
      <g fill="none" stroke="#d86f86" strokeWidth="22">
        {RAMPS.map((d, i) => <path key={i} d={d} />)}
      </g>
      <path d={H417} fill="none" stroke="#d4607c" strokeWidth="49" />
      <g fill="none" stroke="#e892a2" strokeWidth="18">
        {RAMPS.map((d, i) => <path key={i} d={d} />)}
      </g>
      <path d={H417} fill="none" stroke="#e892a2" strokeWidth="45" />
      <path d={H417} fill="none" stroke="#c98094" strokeWidth="2.500" strokeDasharray="12 9" />
      <path d="M640 1470L580 1510M720 1510Q760 1440 850 1375M740 1510Q780 1445 860 1385M400 1475L570 1508" fill="none" stroke="#6a4a50" strokeWidth="2.500" />

      <path d={RAIL} fill="none" stroke="#f2f0ea" strokeWidth="14" />
      <path d={RAIL} fill="none" stroke="#777777" strokeWidth="13" strokeDasharray="10 7" />
      <path d="M1253 1220L1250 1170Q1255 1140 1295 1125M1267 1218L1264 1175Q1270 1150 1300 1135" fill="none" stroke="#777" strokeWidth="3" />

      {/* main roads */}
      {[BAYSHORE, HOLLY, PINECREST, CARLING, RICHMOND].map((d, i) => (
        <path key={i} d={d} fill="none" stroke="#a9ab55" strokeWidth={i === 1 ? 29 : 34} strokeLinejoin="round" />
      ))}
      {[BAYSHORE, HOLLY, PINECREST, CARLING, RICHMOND].map((d, i) => (
        <path key={i} d={d} fill="none" stroke="#f7fabf" strokeWidth={i === 1 ? 25 : 30} strokeLinejoin="round" />
      ))}
      <path d="M440 880Q500 870 540 850L520 890L545 960L500 920ZM1720 925L1830 935L1760 1010L1710 1050Z" fill="#f7fabf" />
      <path d="M1650 940Q1690 900 1725 930M1655 948Q1690 912 1720 938" fill="none" stroke="#8a7a70" strokeWidth="3" />
      <path d="M1430 440L1450 453L1700 348" fill="none" stroke="#b39aa5" strokeWidth="4" strokeDasharray="14 5 4 5" />
      <path d="M408 690H432M420 664V690M404 676Q412 662 420 668M434 662Q424 660 420 668M432 680Q428 670 420 668" stroke="#666" strokeWidth="4" fill="none" />

      <Shield x={332} y={921} w={64} text="38" /><Shield x={72} y={1042} w={64} text="18" white /><Shield x={627} y={1128} w={62} text="16" />
      <Shield x={2293} y={428} w={66} text="36" /><Shield x={2188} y={120} w={64} text="36" /><Shield x={1461} y={1391} w={62} text="36" />
      <Shield x={1702} y={1219} w={82} text="417" pink /><Shield x={2732} y={408} w={66} text="13" /><Shield x={1376} y={1512} w={84} text="" />
      {LABELS.map((d, i) => <MapLabel key={i} d={d} />)}

      <Track />
      <circle cx="2168" cy="178" r="16.500" fill="#0000ff" />
      <text x="2169" y="177" fontFamily="'DejaVu Sans',sans-serif" fontSize="79" textLength="156" lengthAdjust="spacingAndGlyphs">BS1</text>
      <rect x="2332" y="1410" width="416" height="96" fill="#fff" />
      <rect x="2340" y="1419" width="399" height="15" fill="#000" />
      <text x="2538" y="1488" textAnchor="middle" fontFamily="'DejaVu Sans',sans-serif" fontSize="42" textLength="131" lengthAdjust="spacingAndGlyphs">500 m</text>
    </g>
  );
}

/* ---------- figure ---------- */

const Y_TICKS = ["45.358", "45.356", "45.354", "45.352", "45.350", "45.348", "45.346", "45.344"];
const X_TICKS = ["−75.820", "−75.815", "−75.810", "−75.805", "−75.800", "−75.795"];
const C_TICKS = ["−70", "−75", "−80", "−85", "−90", "−95", "−100"];

function Figure() {
  return (
    <svg viewBox="457 139 1239 922" className="ml-[10px] h-[922px] w-[1239px] bg-white" fontFamily="'DejaVu Sans',sans-serif" fontSize="19.200">
      <defs>
        <clipPath id="axes"><rect x="612" y="357" width="906" height="497" /></clipPath>
        <linearGradient id="heat" x1="0" y1="1" x2="0" y2="0">
          <stop offset="0" stopColor="#000" />
          <stop offset="0.500" stopColor="#c00000" />
          <stop offset="0.667" stopColor="#ff5500" />
          <stop offset="0.750" stopColor="#ff8000" />
          <stop offset="1" stopColor="#fff" />
        </linearGradient>
      </defs>
      <text x="1064" y="344" fontSize="33" textAnchor="middle" textLength="401" lengthAdjust="spacingAndGlyphs">Signal Power vs Position</text>
      <g clipPath="url(#axes)"><MapArt /></g>
      <rect x="612.500" y="357.500" width="905" height="496" fill="none" stroke="#000" />
      {Y_TICKS.map((t, i) => (
        <g key={t}>
          <path d={`M607.500 ${387.5 + i * 59}h5`} stroke="#000" />
          <text x="602" y={394 + i * 59} textAnchor="end" textLength="67" lengthAdjust="spacingAndGlyphs">{t}</text>
        </g>
      ))}
      {X_TICKS.map((t, i) => (
        <g key={t}>
          <path d={`M${Math.round(706 + i * 147.4) + 0.5} 854v5`} stroke="#000" />
          <text x={706 + i * 147.4} y="877" textAnchor="middle" textLength="83" lengthAdjust="spacingAndGlyphs">{t}</text>
        </g>
      ))}
      <text x="1064" y="911" fontSize="22" textAnchor="middle" textLength="109" lengthAdjust="spacingAndGlyphs">Longitude</text>
      <text transform="translate(517 608.500) rotate(-90)" fontSize="22" textAnchor="middle" textLength="91" lengthAdjust="spacingAndGlyphs">Latitude</text>
      <rect x="1527.500" y="357.500" width="45" height="496" fill="url(#heat)" stroke="#000" />
      {C_TICKS.map((t, i) => (
        <g key={t}>
          <path d={`M1573 ${Math.round(385 + i * 68.8) + 0.5}h5`} stroke="#000" />
          <text x="1582" y={392.3 + i * 68.8}>{t}</text>
        </g>
      ))}
      <text transform="translate(1640.500 605.500) rotate(90)" fontSize="22" textAnchor="middle" textLength="217" lengthAdjust="spacingAndGlyphs">Signal Power (dBm)</text>
    </svg>
  );
}

/* ---------- window ---------- */

function Tabs() {
  const idle = "flex h-[27px] items-center justify-center border border-[#b4b4b4] border-l-0 bg-linear-to-b from-[#eaeaea] to-[#e2e2e2] rounded-tr-[3px]";
  return (
    <div className="relative z-10 -mb-px flex items-end">
      <div className="flex h-[30px] w-[55px] items-center justify-center rounded-t-[3px] border border-b-0 border-[#acacac] bg-[#fdfdfd] pr-[1px]">Map</div>
      <div className={`${idle} w-[59px]`}>RSRP</div>
      <div className={`${idle} w-[89px] text-[14.300px]`}>Path Loss</div>
      <div className={`${idle} w-[87px] text-[14.300px]`}>Raw Data</div>
    </div>
  );
}

export default function App() {
  return (
    <div className={`h-[1092px] w-[1726px] overflow-hidden bg-white px-[9px] pt-[7px] ${UI_FONT} text-[14.600px] text-[#1a1a1a]`}>
      <div className="flex h-[1076px] w-[1708px] flex-col rounded-t-[8px] border border-[#929292] bg-[#efefef] shadow-[0_3px_14px_3px_rgba(0,0,0,0.4)]">
        <header className="flex h-[37px] shrink-0 items-center rounded-t-[7px] border-t border-b border-t-[#f3f1f0] border-b-[#bfb8b1] bg-linear-to-b from-[#e1dedb] to-[#dad6d2]">
          <div className="w-[40px]" />
          <h1 className="flex-1 pt-[1px] text-center text-[13.800px] font-bold tracking-[-0.080px] text-[#2e3436]">routesignal 0.12.0</h1>
          <div className="flex w-[40px] justify-center pl-[4px]">
            <svg width="8" height="8" viewBox="0 0 8 8"><path d="M0.800 0.800l6.400 6.400M7.200 0.800L0.800 7.200" stroke="#2e3436" strokeWidth="1.800" /></svg>
          </div>
        </header>
        <div className="flex flex-1 pl-[18px]">
          <Sidebar />
          <main className="flex flex-1 flex-col pt-[9px] pr-[9px] pl-[15px]">
            <Tabs />
            <section className="h-[989px] w-[1261px] border border-[#acacac] bg-[#fbfbfb]">
              <Toolbar />
              <Figure />
            </section>
          </main>
        </div>
      </div>
    </div>
  );
}
